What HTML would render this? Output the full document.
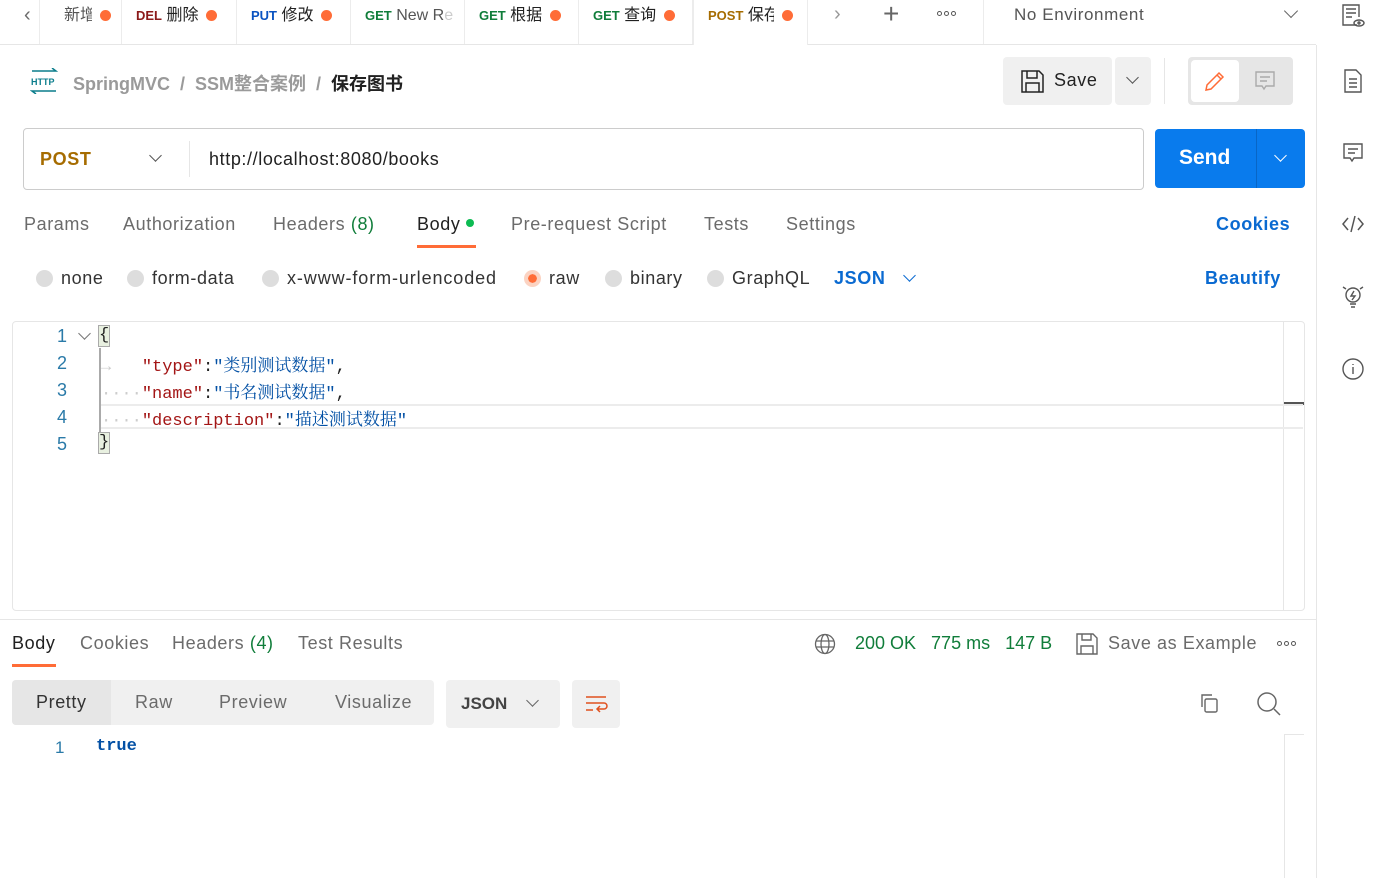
<!DOCTYPE html>
<html><head><meta charset="utf-8"><style>
*{margin:0;padding:0;box-sizing:border-box}
body{width:1383px;height:878px;background:#fff;font-family:"Liberation Sans","Noto Sans CJK SC",sans-serif;color:#212121;position:relative;overflow:hidden}
.a{position:absolute;white-space:nowrap}
.t{letter-spacing:0.6px}
.g{color:#6b6b6b}
.dot{display:inline-block;width:11px;height:11px;border-radius:50%;background:#ff6c37;vertical-align:middle;margin-left:8px}
.tab{position:absolute;top:0;height:44px;font-size:16px;line-height:32px;padding-left:14px;border-right:1px solid #ececec;overflow:hidden;white-space:nowrap}
.cut{display:inline-block;height:32px;overflow:hidden;vertical-align:top;white-space:nowrap}
.m{font-size:13px;font-weight:bold}
.rad{display:inline-block;width:17px;height:17px;border-radius:50%;background:#ddd;vertical-align:-3px;margin-right:8px}
.mono{font-family:"Liberation Mono","Noto Serif CJK SC",monospace;font-size:17px}
.k{color:#a31515}.s{color:#0451a5}
.ln{color:#2a7aa8;font-size:18px}
.dots{display:flex;gap:2px}.dots i{display:block;width:5px;height:5px;border:1.3px solid #555;border-radius:50%}
</style></head><body>
<div class="a" style="left:0;top:44px;width:1316px;height:1px;background:#e6e6e6"></div>
<div class="a g" style="left:24px;top:4px;font-size:20px">‹</div>
<div class="a" style="left:39px;top:0;width:1px;height:44px;background:#ececec"></div>
<div class="tab" style="left:50px;width:72px;color:#555"><span class="cut" style="width:28px">新增</span><span class="dot"></span></div>
<div class="tab" style="left:122px;width:115px"><span class="m" style="color:#8b1a1a">DEL</span> 删除<span class="dot"></span></div>
<div class="tab" style="left:237px;width:114px"><span class="m" style="color:#0a53c1">PUT</span> 修改<span class="dot"></span></div>
<div class="tab" style="left:351px;width:114px"><span class="m" style="color:#107d3a">GET</span> <span style="color:#555">New R</span><span style="color:#ccc">e</span></div>
<div class="tab" style="left:465px;width:114px"><span class="m" style="color:#107d3a">GET</span> 根据<span class="dot"></span></div>
<div class="tab" style="left:579px;width:114px"><span class="m" style="color:#107d3a">GET</span> 查询<span class="dot"></span></div>
<div class="tab" style="left:693px;width:115px;height:45px;background:#fff;border-left:1px solid #ececec"><span class="m" style="color:#a66c00">POST</span> <span class="cut" style="width:26px">保存</span><span class="dot"></span></div>
<div class="a g" style="left:834px;top:3px;font-size:20px;color:#999">›</div>
<div class="a" style="left:883px;top:-2px;font-size:28px;color:#666;font-weight:300">+</div>
<div class="a dots" style="left:937px;top:11px"><i></i><i></i><i></i></div>
<div class="a" style="left:983px;top:0;width:1px;height:44px;background:#ececec"></div>
<div class="a t" style="left:1014px;top:5px;font-size:17px;color:#555">No Environment</div>
<div class="a" style="left:1286px;top:6px;width:10px;height:10px;border-right:1.5px solid #666;border-bottom:1.5px solid #666;transform:rotate(45deg)"></div>
<div class="a" style="left:1316px;top:45px;width:1px;height:833px;background:#e6e6e6"></div>
<svg class="a" style="left:1340px;top:3px" width="26" height="26" viewBox="0 0 26 26" fill="none" stroke="#555" stroke-width="1.4"><path d="M17 22H3V2h16v12M6 6h10M6 10h10M6 14h6"/><ellipse cx="19" cy="20" rx="5" ry="3"/><circle cx="19" cy="20" r="1"/></svg>
<svg class="a" style="left:1343px;top:68px" width="20" height="26" viewBox="0 0 20 26" fill="none" stroke="#555" stroke-width="1.4"><path d="M2 2h11l5 5v17H2zM6 11h8M6 15h8M6 19h8"/></svg>
<svg class="a" style="left:1342px;top:142px" width="22" height="22" viewBox="0 0 22 22" fill="none" stroke="#555" stroke-width="1.4"><path d="M2 2h18v14H12l-2 3-2-3H2zM6 7h10M6 11h7"/></svg>
<svg class="a" style="left:1341px;top:213px" width="24" height="22" viewBox="0 0 24 22" fill="none" stroke="#555" stroke-width="1.5"><path d="M7 5l-5 6 5 6M17 5l5 6-5 6M14 3l-4 16"/></svg>
<svg class="a" style="left:1341px;top:283px" width="24" height="26" viewBox="0 0 24 26" fill="none" stroke="#555" stroke-width="1.4"><circle cx="12" cy="12" r="7"/><path d="M9 21h6M10 24h4M13 8l-3 5h4l-3 4M2 4l3 2M22 4l-3 2"/></svg>
<svg class="a" style="left:1341px;top:357px" width="24" height="24" viewBox="0 0 24 24" fill="none" stroke="#555" stroke-width="1.4"><circle cx="12" cy="12" r="10"/><path d="M12 10v7M12 7v1"/></svg>
<svg class="a" style="left:30px;top:68px" width="28" height="26" viewBox="0 0 28 26" fill="none" stroke="#0a7d8c" stroke-width="1.5"><path d="M2 3h24l-4-3M26 23H2l4 3"/><text x="1" y="17" font-size="9" font-family="Liberation Sans" fill="#0a7d8c" stroke="none" font-weight="bold">HTTP</text></svg>
<div class="a" style="left:73px;top:70px;font-size:18px;font-weight:bold;color:#9a9a9a">SpringMVC &nbsp;/&nbsp; SSM整合案例 &nbsp;/&nbsp; <span style="color:#212121">保存图书</span></div>
<div class="a" style="left:1003px;top:57px;width:109px;height:48px;background:#f0f0f0;border-radius:4px"></div>
<svg class="a" style="left:1020px;top:69px" width="25" height="25" viewBox="0 0 25 25" fill="none" stroke="#222" stroke-width="1.5"><path d="M2 2h17l4 4v17H2zM7 2v7h10V2M6 23v-9h13v9"/></svg>
<div class="a t" style="left:1054px;top:70px;font-size:18px;color:#222">Save</div>
<div class="a" style="left:1115px;top:57px;width:36px;height:48px;background:#f0f0f0;border-radius:4px"></div>
<div class="a" style="left:1128px;top:73px;width:9px;height:9px;border-right:1.5px solid #555;border-bottom:1.5px solid #555;transform:rotate(45deg)"></div>
<div class="a" style="left:1164px;top:58px;width:1px;height:46px;background:#e6e6e6"></div>
<div class="a" style="left:1188px;top:57px;width:105px;height:48px;background:#e6e6e6;border-radius:4px"></div>
<div class="a" style="left:1191px;top:60px;width:48px;height:42px;background:#fff;border-radius:4px"></div>
<svg class="a" style="left:1203px;top:69px" width="24" height="24" viewBox="0 0 24 24" fill="none" stroke="#ff6c37" stroke-width="1.5"><path d="M3 21l1-5L16 4l4 4L8 20zM14 6l4 4"/></svg>
<svg class="a" style="left:1254px;top:70px" width="22" height="22" viewBox="0 0 22 22" fill="none" stroke="#aaa" stroke-width="1.4"><path d="M2 2h18v14H12l-2 3-2-3H2zM6 7h10M6 11h7"/></svg>
<div class="a" style="left:23px;top:128px;width:1121px;height:62px;border:1px solid #ccc;border-radius:4px"></div>
<div class="a t" style="left:40px;top:149px;font-size:18px;font-weight:bold;color:#a66c00">POST</div>
<div class="a" style="left:151px;top:151px;width:9px;height:9px;border-right:1.5px solid #555;border-bottom:1.5px solid #555;transform:rotate(45deg)"></div>
<div class="a" style="left:189px;top:141px;width:1px;height:36px;background:#e6e6e6"></div>
<div class="a t" style="left:209px;top:149px;font-size:18px;color:#222">http://localhost:8080/books</div>
<div class="a" style="left:1155px;top:129px;width:150px;height:59px;background:#097bed;border-radius:4px"></div>
<div class="a" style="left:1256px;top:129px;width:1px;height:59px;background:#0866c6"></div>
<div class="a" style="left:1179px;top:146px;font-size:21px;font-weight:bold;color:#fff">Send</div>
<div class="a" style="left:1276px;top:151px;width:9px;height:9px;border-right:1.5px solid #fff;border-bottom:1.5px solid #fff;transform:rotate(45deg)"></div>
<div class="a g t" style="left:24px;top:214px;font-size:18px">Params</div>
<div class="a g t" style="left:123px;top:214px;font-size:18px">Authorization</div>
<div class="a g t" style="left:273px;top:214px;font-size:18px">Headers <span style="color:#107d3a">(8)</span></div>
<div class="a t" style="left:417px;top:214px;font-size:18px;color:#212121">Body <span style="display:inline-block;width:8px;height:8px;border-radius:50%;background:#0cbb52;vertical-align:3px"></span></div>
<div class="a" style="left:417px;top:245px;width:59px;height:3px;background:#ff6c37"></div>
<div class="a g t" style="left:511px;top:214px;font-size:18px">Pre-request Script</div>
<div class="a g t" style="left:704px;top:214px;font-size:18px">Tests</div>
<div class="a g t" style="left:786px;top:214px;font-size:18px">Settings</div>
<div class="a t" style="left:1216px;top:214px;font-size:18px;font-weight:bold;color:#0a6ad1">Cookies</div>
<div class="a t" style="left:36px;top:268px;font-size:18px;color:#333"><span class="rad"></span>none</div>
<div class="a t" style="left:127px;top:268px;font-size:18px;color:#333"><span class="rad"></span>form-data</div>
<div class="a t" style="left:262px;top:268px;font-size:18px;color:#333;letter-spacing:0.9px"><span class="rad"></span>x-www-form-urlencoded</div>
<div class="a t" style="left:524px;top:268px;font-size:18px;color:#333"><span class="rad" style="background:#fff;border:4px solid #fbd3c2;box-shadow:inset 0 0 0 5px #ff6c37"></span>raw</div>
<div class="a t" style="left:605px;top:268px;font-size:18px;color:#333"><span class="rad"></span>binary</div>
<div class="a t" style="left:707px;top:268px;font-size:18px;color:#333"><span class="rad"></span>GraphQL</div>
<div class="a t" style="left:834px;top:268px;font-size:18px;font-weight:bold;color:#0a6ad1">JSON</div>
<div class="a" style="left:905px;top:271px;width:9px;height:9px;border-right:1.5px solid #0a6ad1;border-bottom:1.5px solid #0a6ad1;transform:rotate(45deg)"></div>
<div class="a t" style="left:1205px;top:268px;font-size:18px;font-weight:bold;color:#0a6ad1">Beautify</div>
<div class="a" style="left:12px;top:321px;width:1293px;height:290px;border:1px solid #e6e6e6;border-radius:4px"></div>
<div class="a" style="left:1283px;top:322px;width:1px;height:288px;background:#e6e6e6"></div>
<div class="a" style="left:1284px;top:402px;width:20px;height:3px;background:#555"></div>
<div class="a" style="left:100px;top:404px;width:1203px;height:25px;border-top:2px solid #ececec;border-bottom:2px solid #ececec"></div>
<div class="a" style="left:99px;top:348px;width:2px;height:84px;background:#aaa"></div>
<div class="a ln" style="left:57px;top:326px">1</div>
<div class="a ln" style="left:57px;top:353px">2</div>
<div class="a ln" style="left:57px;top:380px">3</div>
<div class="a ln" style="left:57px;top:407px">4</div>
<div class="a ln" style="left:57px;top:434px">5</div>
<div class="a" style="left:80px;top:329px;width:9px;height:9px;border-right:1.5px solid #777;border-bottom:1.5px solid #777;transform:rotate(45deg)"></div>
<div class="a mono" style="left:98px;top:325px;background:#e8f0e0;border:1px solid #aaa;line-height:20px">{</div>
<div class="a mono" style="left:98px;top:432px;background:#e8f0e0;border:1px solid #aaa;line-height:20px">}</div>
<div class="a mono" style="left:101px;top:351px"><span style="color:#ccc">→&nbsp;&nbsp;</span>&nbsp;<span class="k">"type"</span>:<span class="s">"类别测试数据"</span>,</div>
<div class="a mono" style="left:101px;top:378px"><span style="color:#ccc">····</span><span class="k">"name"</span>:<span class="s">"书名测试数据"</span>,</div>
<div class="a mono" style="left:101px;top:405px"><span style="color:#ccc">····</span><span class="k">"description"</span>:<span class="s">"描述测试数据"</span></div>
<div class="a" style="left:0;top:619px;width:1316px;height:1px;background:#e6e6e6"></div>
<div class="a t" style="left:12px;top:633px;font-size:18px;color:#212121">Body</div>
<div class="a" style="left:12px;top:664px;width:44px;height:3px;background:#ff6c37"></div>
<div class="a g t" style="left:80px;top:633px;font-size:18px">Cookies</div>
<div class="a g t" style="left:172px;top:633px;font-size:18px">Headers <span style="color:#107d3a">(4)</span></div>
<div class="a g t" style="left:298px;top:633px;font-size:18px">Test Results</div>
<svg class="a" style="left:814px;top:633px" width="22" height="22" viewBox="0 0 22 22" fill="none" stroke="#666" stroke-width="1.3"><circle cx="11" cy="11" r="9.5"/><ellipse cx="11" cy="11" rx="4" ry="9.5"/><path d="M2 8h18M2 14h18"/></svg>
<div class="a" style="left:855px;top:633px;font-size:18px;color:#107d3a">200 OK &nbsp;&nbsp;775 ms &nbsp;&nbsp;147 B</div>
<svg class="a" style="left:1075px;top:632px" width="24" height="24" viewBox="0 0 24 24" fill="none" stroke="#666" stroke-width="1.4"><path d="M2 2h16l4 4v16H2zM7 2v6h9V2M6 22v-8h12v8"/></svg>
<div class="a g t" style="left:1108px;top:633px;font-size:18px">Save as Example</div>
<div class="a dots" style="left:1277px;top:641px"><i></i><i></i><i></i></div>
<div class="a" style="left:12px;top:680px;width:422px;height:45px;background:#f0f0f0;border-radius:4px"></div>
<div class="a" style="left:12px;top:680px;width:99px;height:45px;background:#e6e6e6;border-radius:4px 0 0 4px"></div>
<div class="a t" style="left:36px;top:692px;font-size:18px;color:#333">Pretty</div>
<div class="a g t" style="left:135px;top:692px;font-size:18px">Raw</div>
<div class="a g t" style="left:219px;top:692px;font-size:18px">Preview</div>
<div class="a g t" style="left:335px;top:692px;font-size:18px">Visualize</div>
<div class="a" style="left:446px;top:680px;width:114px;height:48px;background:#f0f0f0;border-radius:4px"></div>
<div class="a" style="left:461px;top:694px;font-size:17px;font-weight:bold;color:#444">JSON</div>
<div class="a" style="left:528px;top:696px;width:9px;height:9px;border-right:1.5px solid #666;border-bottom:1.5px solid #666;transform:rotate(45deg)"></div>
<div class="a" style="left:572px;top:680px;width:48px;height:48px;background:#f0f0f0;border-radius:4px"></div>
<svg class="a" style="left:584px;top:692px" width="24" height="24" viewBox="0 0 24 24" fill="none" stroke="#e0501e" stroke-width="1.5"><path d="M2 5h20M2 11h18a3 3 0 0 1 0 6h-6M16 14l-3 3 3 3M2 18h7"/></svg>
<svg class="a" style="left:1197px;top:691px" width="24" height="24" viewBox="0 0 24 24" fill="none" stroke="#666" stroke-width="1.4"><rect x="8" y="8" width="12" height="13" rx="1.5"/><path d="M5 16V4h10"/></svg>
<svg class="a" style="left:1256px;top:691px" width="26" height="26" viewBox="0 0 26 26" fill="none" stroke="#666" stroke-width="1.5"><circle cx="11" cy="11" r="9"/><path d="M18 18l6 6"/></svg>
<div class="a" style="left:1284px;top:734px;width:1px;height:144px;background:#e6e6e6"></div>
<div class="a" style="left:1284px;top:734px;width:20px;height:1px;background:#e6e6e6"></div>
<div class="a ln" style="left:55px;top:738px;font-size:17px">1</div>
<div class="a mono" style="left:96px;top:737px;color:#0451a5;font-weight:bold">true</div>
</body></html>
